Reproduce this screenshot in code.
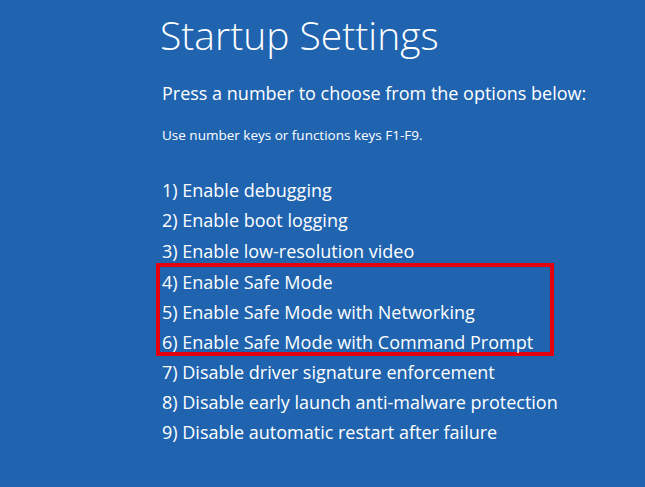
export default function App() {
  const items = [
    "1) Enable debugging",
    "2) Enable boot logging",
    "3) Enable low-resolution video",
  ];
  const safe = [
    "4) Enable Safe Mode",
    "5) Enable Safe Mode with Networking",
    "6) Enable Safe Mode with Command Prompt",
  ];
  const rest = [
    "7) Disable driver signature enforcement",
    "8) Disable early launch anti-malware protection",
    "9) Disable automatic restart after failure",
  ];
  return (
    <div
      className="w-[645px] h-[487px] bg-[#2064b0] text-white overflow-hidden pl-[160px] pt-[10px]"
      style={{ fontFamily: '"Open Sans", "Noto Sans", sans-serif' }}
    >
      <div className="text-[39px] font-light leading-[50px]">Startup Settings</div>
      <div className="text-[18px] leading-[26px] mt-[20px] ml-[2px]">Press a number to choose from the options below:</div>
      <div className="text-[13.5px] leading-[18px] mt-[20px] ml-[2px]">Use number keys or functions keys F1-F9.</div>
      <div className="mt-[31px] ml-[2px] text-[18px]">
        {items.map((t) => (
          <div key={t} className="leading-[30.3px]">{t}</div>
        ))}
        <div className="border-[4px] border-[#e3000f] -ml-[6px] pl-[2px] w-[398px] h-[93px] -mt-[3px] mb-[1px]">
          {safe.map((t) => (
            <div key={t} className="leading-[30.3px]">{t}</div>
          ))}
        </div>
        {rest.map((t) => (
          <div key={t} className="leading-[30.3px]">{t}</div>
        ))}
      </div>
    </div>
  );
}
